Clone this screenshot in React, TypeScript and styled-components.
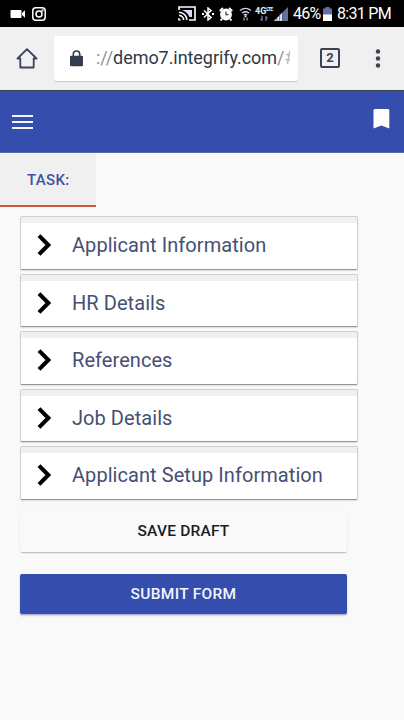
import React from 'react';
import styled, { createGlobalStyle } from 'styled-components';

const Global = createGlobalStyle`
  *, *::before, *::after { box-sizing: border-box; }
  body { margin: 0; background: #f9f9f9; font-family: Roboto, "Liberation Sans", sans-serif; }
  svg { display: block; flex: none; }
`;

const Screen = styled.div`
  width: 404px;
  height: 720px;
  overflow: hidden;
  background: #f9f9f9;
`;

const StatusBar = styled.header`
  display: flex;
  align-items: center;
  height: 27px;
  padding-left: 10px;
  background: #000;
  color: #fff;
`;

const StatusItem = styled.div<{ $gap?: number }>`
  flex: none;
  margin-left: ${(p) => p.$gap ?? 0}px;
`;

const StatusText = styled.span<{ $gap: number; $width: number; $spacing?: number }>`
  flex: none;
  width: ${(p) => p.$width}px;
  margin-left: ${(p) => p.$gap}px;
  padding-top: 1px;
  font-size: 16px;
  line-height: 26px;
  letter-spacing: ${(p) => p.$spacing ?? 0}px;
  white-space: nowrap;
`;

const BrowserBar = styled.div`
  display: flex;
  align-items: center;
  height: 64px;
  padding: 0 0 1px 16px;
  background: #f0f0f0;
  border-bottom: 1px solid #3b4353;
`;

const AddressBar = styled.div`
  display: flex;
  align-items: center;
  width: 244px;
  height: 45px;
  margin: 0 22px 0 16px;
  padding-left: 16px;
  background: #fff;
  border-radius: 2px;
  box-shadow: 0 1px 1px #c9c9c9;
`;

const Url = styled.div`
  width: 194px;
  margin-left: 13px;
  overflow: hidden;
  font-size: 18px;
  line-height: 26px;
  letter-spacing: -0.06px;
  white-space: nowrap;
  color: #303848;
`;

const Faded = styled.span<{ $light?: boolean }>`
  color: ${(p) => (p.$light ? '#b4b4b4' : '#8f8f8f')};
`;

const TabCount = styled.div`
  display: grid;
  place-items: center;
  width: 20px;
  height: 20px;
  margin-right: 35px;
  border: 2px solid #3a4354;
  border-radius: 2px;
  color: #3a4354;
  font-size: 13px;
  font-weight: 700;
  line-height: 16px;
`;

const AppBar = styled.nav`
  display: flex;
  justify-content: space-between;
  height: 62px;
  padding: 17px 14px 0 12px;
  background: #354dac;
  border-bottom: 1px solid #5d689f;
`;

const MenuIcon = styled.div`
  display: grid;
  gap: 4px;
  align-content: start;
  width: 21px;
  padding-top: 7px;
`;

const MenuLine = styled.span`
  height: 2px;
  background: #f3f4fc;
`;

const TaskTab = styled.div`
  width: 96px;
  height: 54px;
  padding-left: 27px;
  background: #f0f0f0;
  border-bottom: 2px solid #c95d35;
  color: #3d51a4;
  font-size: 15px;
  font-weight: 500;
  line-height: 55px;
  letter-spacing: 0.35px;
`;

const Form = styled.main`
  padding: 9px 0 0 20px;
`;

const Sections = styled.div`
  display: grid;
  grid-auto-rows: 53.5px;
  gap: 4px;
  width: 338px;
`;

const Section = styled.section`
  display: flex;
  align-items: center;
  padding: 5px 0 0 16px;
  background: #fff;
  border: 1px solid #cfcfcf;
  border-bottom-color: #969696;
  border-radius: 2px;
  box-shadow: inset 0 6px #f0f0f0, 0 1px 1px #dddddd;
`;

const SectionTitle = styled.span`
  margin-left: 21px;
  color: #464f73;
  font-size: 20px;
  line-height: 28px;
  letter-spacing: 0.06px;
  white-space: nowrap;
`;

const Actions = styled.div`
  display: grid;
  gap: 22px;
  width: 327px;
  margin-top: 12px;
`;

const Button = styled.button<{ $primary?: boolean }>`
  height: 40px;
  padding: 0;
  border: 0;
  border-radius: 2px;
  background: ${(p) => (p.$primary ? '#354dac' : '#f9f9f9')};
  color: ${(p) => (p.$primary ? '#f4f5fd' : '#171c29')};
  box-shadow: ${(p) => (p.$primary ? '0 1px 1px #aab3d3, 0 2px 2px #d6d6d6' : '0 2px 1px -1px #bebebe, 0 1px 2px #d8d8d8')};
  font: 500 15.5px/${(p) => (p.$primary ? 40 : 39)}px Roboto, "Liberation Sans", sans-serif;
  letter-spacing: ${(p) => (p.$primary ? 0.3 : 0.2)}px;
`;

const sections = [
  'Applicant Information',
  'HR Details',
  'References',
  'Job Details',
  'Applicant Setup Information',
];

const CameraIcon = () => (
  <svg width="16" height="10" viewBox="0 0 16 10" fill="#fff">
    <rect x="0.5" y="1" width="11" height="8" rx="1" />
    <path d="M12 4 15 1.3V8.7L12 6Z" />
  </svg>
);

const InstagramIcon = () => (
  <svg width="14" height="14" viewBox="0 0 14 14" fill="none" stroke="#fff" strokeWidth="1.5">
    <rect x="0.8" y="0.8" width="12.4" height="12.4" rx="3" />
    <circle cx="7" cy="7" r="3" />
    <circle cx="10.5" cy="3.5" r="0.4" />
  </svg>
);

const CastIcon = () => (
  <svg width="18" height="15" viewBox="0 0 18 15" fill="none" stroke="#fff" strokeWidth="1.6">
    <path d="M1 4V1H17V14H11" />
    <path d="M4 4H14V11H11.5Q9.5 6 4 4Z" fill="#d8dcf0" stroke="none" />
    <path d="M1 6.2A7.8 7.8 0 0 1 8.8 14M1 9.4A4.6 4.6 0 0 1 5.6 14" />
    <path d="M.2 12V14.5H2.8A2.6 2.6 0 0 0 .2 12Z" fill="#fff" stroke="none" />
  </svg>
);

const BluetoothIcon = () => (
  <svg width="12" height="14" viewBox="0 0 12 14" fill="none" stroke="#fff" strokeWidth="1.5">
    <path d="m2 3.5 7 7L6 13V1l3 2.5-7 7" />
    <path d="M0 7h2M10 7h2" strokeWidth="1.8" />
  </svg>
);

const AlarmIcon = () => (
  <svg width="14" height="14" viewBox="0 0 14 14" fill="none">
    <circle cx="7" cy="7.5" r="5.9" fill="#fff" />
    <path d="M.7 4 4 1M10 1l3.3 3M3 12l-1.5 1.5M11 12l1.5 1.5" stroke="#fff" strokeWidth="1.8" />
    <path d="M7 4.5v3.3h2.6" stroke="#20232c" strokeWidth="1.1" />
  </svg>
);

const WifiIcon = () => (
  <svg width="13" height="14" viewBox="0 0 13 14" fill="none" stroke="#cfd4ef" strokeWidth="1.4">
    <path d="M1 3.5Q6.5-.8 12 3.5M3 6Q6.5 3.4 10 6M4.7 8Q6.5 6.8 8.3 8" />
    <circle cx="6.5" cy="9.2" r="1" fill="#fff" stroke="none" />
    <path d="M5 10.5v3M8 10.5v3" stroke="#7d86b6" strokeWidth="1.5" />
  </svg>
);

const Network = styled.div`
  display: grid;
  justify-items: center;
  gap: 1px;
  width: 17px;
`;

const NetworkLabel = styled.span`
  display: flex;
  align-items: flex-start;
  color: #eef0fb;
  font-size: 9px;
  font-weight: 700;
  line-height: 8px;
`;

const NetworkSuffix = styled.span`
  font-size: 5px;
  line-height: 5px;
  letter-spacing: -0.6px;
`;

const ArrowsIcon = () => (
  <svg width="8" height="5" viewBox="0 0 8 5" fill="none" stroke="#747da8" strokeWidth="1.3">
    <path d="M2 0v5M.5 3 2 4.5M6 5V0M7.5 2 6 .5" />
  </svg>
);

const SignalIcon = () => (
  <svg width="14" height="14" viewBox="0 0 14 14">
    <path d="M0 14 14 0V14Z" fill="#66709e" />
    <path d="M0 14 8.4 5.6V14Z" fill="#e4e7f8" />
    <path d="M2.8 10v4M5.6 7v7M8.4 4v10" stroke="#263052" strokeWidth="0.6" />
  </svg>
);

const BatteryIcon = () => (
  <svg width="9" height="14" viewBox="0 0 9 14">
    <path d="M0 1.5H2.5V0H6.5V1.5H9V14H0Z" fill="#6370a4" />
    <path d="M0 7.5H9V14H0Z" fill="#fff" />
  </svg>
);

const HomeIcon = () => (
  <svg width="22" height="22" viewBox="0 0 22 22" fill="none" stroke="#3a435f" strokeWidth="1.8">
    <path d="M1.5 11.5 11 2.2 20.5 11.5H17.7V20.5H4.3V11.5Z" strokeLinejoin="round" />
  </svg>
);

const LockIcon = () => (
  <svg width="13" height="17" viewBox="0 0 13 17">
    <path d="M3.3 7V4.2a3.2 3.2 0 0 1 6.4 0V7" fill="none" stroke="#343c4d" strokeWidth="1.6" />
    <rect y="5.8" width="13" height="10.4" rx="1.3" fill="#343c4d" />
  </svg>
);

const MoreIcon = () => (
  <svg width="6" height="20" viewBox="0 0 6 20" fill="#3a4358">
    <circle cx="3" cy="3.5" r="2.2" />
    <circle cx="3" cy="10.5" r="2.2" />
    <circle cx="3" cy="17.5" r="2.2" />
  </svg>
);

const BookmarkIcon = () => (
  <svg width="17" height="21" viewBox="0 0 17 21">
    <path d="M2 .9H15Q16.3.9 16.3 2.2V20.5L8.4 17.6.5 20.5V2.2Q.5.9 2 .9Z" fill="#fff" />
  </svg>
);

const ChevronIcon = () => (
  <svg width="14" height="22" viewBox="0 0 14 22" fill="none" stroke="#000" strokeWidth="4">
    <path d="m2 1.7 9.3 9.3L2 20.3" />
  </svg>
);

export default function App() {
  return (
    <Screen>
      <Global />
      <StatusBar>
        <StatusItem><CameraIcon /></StatusItem>
        <StatusItem $gap={6}><InstagramIcon /></StatusItem>
        <StatusItem $gap={132}><CastIcon /></StatusItem>
        <StatusItem $gap={6}><BluetoothIcon /></StatusItem>
        <StatusItem $gap={5}><AlarmIcon /></StatusItem>
        <StatusItem $gap={6}><WifiIcon /></StatusItem>
        <StatusItem $gap={3}>
          <Network>
            <NetworkLabel>4G<NetworkSuffix>LTE</NetworkSuffix></NetworkLabel>
            <ArrowsIcon />
          </Network>
        </StatusItem>
        <StatusItem $gap={2}><SignalIcon /></StatusItem>
        <StatusText $gap={5} $width={26} $spacing={-0.8}>46%</StatusText>
        <StatusItem $gap={4}><BatteryIcon /></StatusItem>
        <StatusText $gap={5} $width={58} $spacing={-0.7}>8:31 PM</StatusText>
      </StatusBar>
      <BrowserBar>
        <HomeIcon />
        <AddressBar>
          <LockIcon />
          <Url><Faded>://</Faded>demo7.integrify.com<Faded>/</Faded><Faded $light>#</Faded></Url>
        </AddressBar>
        <TabCount>2</TabCount>
        <MoreIcon />
      </BrowserBar>
      <AppBar>
        <MenuIcon><MenuLine /><MenuLine /><MenuLine /></MenuIcon>
        <BookmarkIcon />
      </AppBar>
      <TaskTab>TASK:</TaskTab>
      <Form>
        <Sections>
          {sections.map((title) => (
            <Section key={title}>
              <ChevronIcon />
              <SectionTitle>{title}</SectionTitle>
            </Section>
          ))}
        </Sections>
        <Actions>
          <Button>SAVE DRAFT</Button>
          <Button $primary>SUBMIT FORM</Button>
        </Actions>
      </Form>
    </Screen>
  );
}
